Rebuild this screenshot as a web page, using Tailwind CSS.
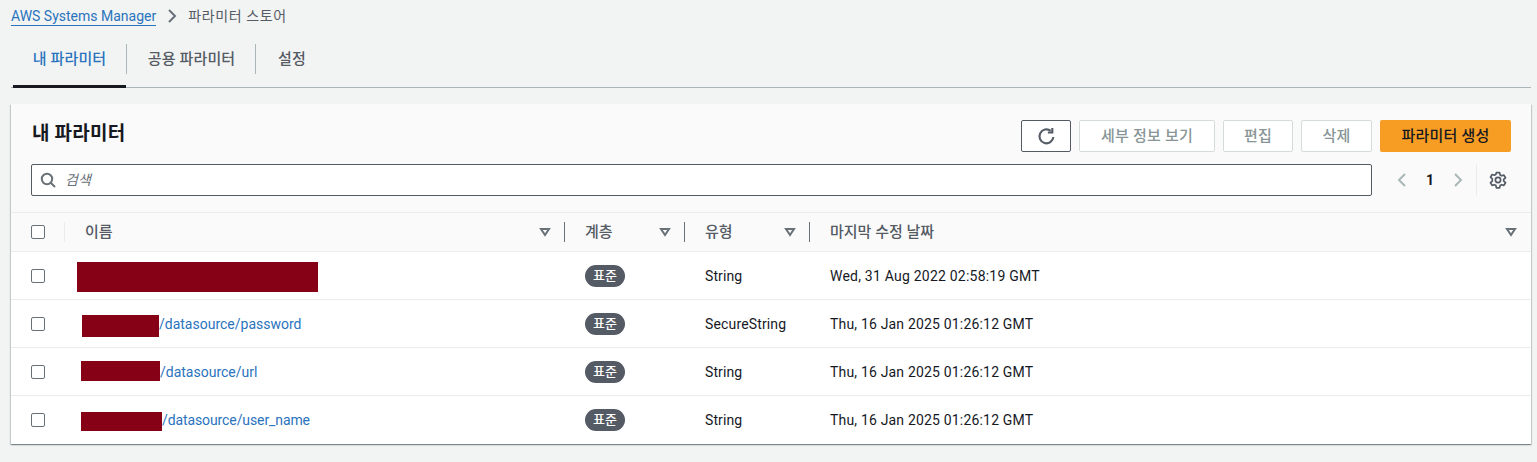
<!DOCTYPE html>
<html lang="ko">
<head>
    <meta charset="UTF-8">
    <title>파라미터 스토어</title>
    <script src="https://cdn.jsdelivr.net/npm/@tailwindcss/browser@4"></script>
</head>
<body class="bg-[#f2f3f3] h-[462px] overflow-hidden text-[14px] leading-[20px] text-[#16191f] font-['Roboto','Noto_Sans_CJK_KR',sans-serif]">
    <!-- Breadcrumb -->
    <nav class="flex items-center h-[32px] pl-[11px]">
        <a class="text-[#2a73bd] border-b border-[#2a73bd] leading-[17px] mt-[1px] text-[14px]">AWS Systems Manager</a>
        <svg class="w-[12px] h-[14px] ml-[10px] mr-[10px]" viewBox="0 0 12 14" fill="none" stroke="#687078" stroke-width="2"><path d="M3 1l6 6-6 6"/></svg>
        <span class="text-[#545b64] text-[14px] tracking-[0.6px]">파라미터 스토어</span>
    </nav>

    <!-- Tabs -->
    <div class="ml-[11px] mr-[6px] mt-[12px] h-[44px] border-b border-[#aab7b8] flex items-start text-[15px] tracking-[0.15px] font-medium text-[#545b64]">
        <div class="relative w-[113px] h-[44px] ml-[2px] border-b-[3px] border-[#16191f] text-[#2a73bd] flex justify-center pt-[5px]">내 파라미터
            <span class="absolute right-[-1px] top-0 h-[30px] w-px bg-[#aab7b8]"></span>
        </div>
        <div class="relative w-[130px] h-[30px] pl-[1px] flex justify-center pt-[5px]">공용 파라미터
            <span class="absolute right-0 top-0 h-[30px] w-px bg-[#aab7b8]"></span>
        </div>
        <div class="w-[72px] h-[30px] flex justify-center pt-[5px]">설정</div>
    </div>

    <!-- Parameters card -->
    <section class="ml-[11px] mr-[6px] mt-[16px] bg-white h-[340px] shadow-[0_1px_1px_0_rgba(0,28,36,0.3),1px_1px_1px_0_rgba(0,28,36,0.15),-1px_1px_1px_0_rgba(0,28,36,0.15)]">
        <div class="bg-[#fafafa] h-[109px] border-b border-[#eaeded] pl-[20px] pr-[20px]">
            <div class="flex justify-between pt-[16px] h-[60px]">
                <h2 class="text-[19px] tracking-[0.2px] font-bold leading-[26px] text-[#16191f] pl-[1px] pt-[1px]">내 파라미터</h2>
                <div class="flex gap-[8px] text-[15px] tracking-[0.2px] font-medium">
                    <button class="w-[50px] h-[32px] bg-white border border-[#545b64] rounded-[2px] flex items-center justify-center">
                        <svg class="w-[19px] h-[19px]" viewBox="0 0 18 18" fill="none" stroke="#545b64" stroke-width="2"><path d="M15.5 9.5A6.6 6.6 0 1 1 13 3.7"/><path d="M14.5 1v4.2h-4.2"/></svg>
                    </button>
                    <button class="w-[136px] h-[32px] bg-white border border-[#d5dbdb] rounded-[2px] text-[#879596]">세부 정보 보기</button>
                    <button class="w-[70px] h-[32px] bg-white border border-[#d5dbdb] rounded-[2px] text-[#879596]">편집</button>
                    <button class="w-[71px] h-[32px] bg-white border border-[#d5dbdb] rounded-[2px] text-[#879596]">삭제</button>
                    <button class="w-[131px] h-[32px] bg-[#f79d24] rounded-[2px] text-[#16191f]">파라미터 생성</button>
                </div>
            </div>
            <div class="flex items-center">
                <div class="w-[1341px] h-[32px] bg-white border border-[#545b64] rounded-[2px] flex items-center pl-[8px]">
                    <svg class="w-[16px] h-[16px]" viewBox="0 0 16 16" fill="none" stroke="#687078" stroke-width="2"><circle cx="7" cy="7" r="5.2"/><path d="M11 11l4 4"/></svg>
                    <span class="italic text-[#687078] ml-[9px] text-[14px]">검색</span>
                </div>
                <svg class="w-[12px] h-[16px] ml-[24px]" viewBox="0 0 12 16" fill="none" stroke="#aab7b8" stroke-width="2"><path d="M9 2L3 8l6 6"/></svg>
                <span class="w-[44px] text-center font-bold text-[14px] text-[#16191f]">1</span>
                <svg class="w-[12px] h-[16px]" viewBox="0 0 12 16" fill="none" stroke="#aab7b8" stroke-width="2"><path d="M3 2l6 6-6 6"/></svg>
                <span class="w-px h-[32px] bg-[#eaeded] ml-[12px]"></span>
                <svg class="w-[18px] h-[18px] ml-[12px]" viewBox="0 0 18 18" fill="none" stroke="#545b64" stroke-width="1.7" stroke-linejoin="round"><path d="M7.4 1.6h3.2l.5 2.3 1.5.9 2.3-.7 1.6 2.7-1.8 1.6v1.7l1.8 1.6-1.6 2.7-2.3-.7-1.5.9-.5 2.3H7.4l-.5-2.3-1.5-.9-2.3.7-1.6-2.7 1.8-1.6V7.8L1.5 6.2l1.6-2.7 2.3.7 1.5-.9z"/><circle cx="9" cy="9" r="2.6"/></svg>
            </div>
        </div>

        <!-- Table header -->
        <div class="grid grid-cols-[54px_500px_120px_125px_1fr] h-[39px] bg-[#fafafa] border-b border-[#eaeded] items-center font-medium text-[15px] text-[#545b64]">
            <div class="relative h-[20px] pl-[20px] flex items-center">
                <span class="w-[14px] h-[14px] border border-[#687078] rounded-[2px] bg-white"></span>
                <span class="absolute right-0 top-0 h-[20px] w-px bg-[#eaeded]"></span>
            </div>
            <div class="relative h-[20px] pl-[20px] flex items-center justify-between pr-[14px]">이름
                <svg class="w-[12px] h-[10px]" viewBox="0 0 12 10" fill="none" stroke="#687078" stroke-width="2"><path d="M2 2h8L6 8z"/></svg>
                <span class="absolute right-0 top-0 h-[20px] w-px bg-[#687078]"></span>
            </div>
            <div class="relative h-[20px] pl-[20px] flex items-center justify-between pr-[14px]">계층
                <svg class="w-[12px] h-[10px]" viewBox="0 0 12 10" fill="none" stroke="#687078" stroke-width="2"><path d="M2 2h8L6 8z"/></svg>
                <span class="absolute right-0 top-0 h-[20px] w-px bg-[#687078]"></span>
            </div>
            <div class="relative h-[20px] pl-[20px] flex items-center justify-between pr-[14px]">유형
                <svg class="w-[12px] h-[10px]" viewBox="0 0 12 10" fill="none" stroke="#687078" stroke-width="2"><path d="M2 2h8L6 8z"/></svg>
                <span class="absolute right-0 top-0 h-[20px] w-px bg-[#687078]"></span>
            </div>
            <div class="h-[20px] pl-[20px] flex items-center justify-between pr-[14px]">마지막 수정 날짜
                <svg class="w-[12px] h-[10px]" viewBox="0 0 12 10" fill="none" stroke="#687078" stroke-width="2"><path d="M2 2h8L6 8z"/></svg>
            </div>
        </div>

        <!-- Rows -->
        <div class="grid grid-cols-[54px_500px_120px_125px_1fr] h-[48px] border-b border-[#eaeded] items-center">
            <div class="pl-[20px] flex"><span class="w-[14px] h-[14px] border border-[#687078] rounded-[2px]"></span></div>
            <div class="pl-[12px] flex items-center"><span class="w-[241px] h-[30px] mt-[3px] bg-[#860016]"></span></div>
            <div class="pl-[20px]"><span class="inline-flex items-center justify-center w-[40px] h-[22px] rounded-full bg-[#545b64] text-white text-[13px] font-medium">표준</span></div>
            <div class="pl-[20px] tracking-[0.1px]">String</div>
            <div class="pl-[20px] tracking-[0.22px]">Wed, 31 Aug 2022 02:58:19 GMT</div>
        </div>
        <div class="grid grid-cols-[54px_500px_120px_125px_1fr] h-[48px] border-b border-[#eaeded] items-center">
            <div class="pl-[20px] flex"><span class="w-[14px] h-[14px] border border-[#687078] rounded-[2px]"></span></div>
            <div class="pl-[17px] flex items-center"><span class="w-[77px] h-[22px] mt-[5px] bg-[#860016]"></span><a class="text-[#2a73bd]">/datasource/password</a></div>
            <div class="pl-[20px]"><span class="inline-flex items-center justify-center w-[40px] h-[22px] rounded-full bg-[#545b64] text-white text-[13px] font-medium">표준</span></div>
            <div class="pl-[20px] tracking-[0.15px]">SecureString</div>
            <div class="pl-[20px] tracking-[0.18px]">Thu, 16 Jan 2025 01:26:12 GMT</div>
        </div>
        <div class="grid grid-cols-[54px_500px_120px_125px_1fr] h-[48px] border-b border-[#eaeded] items-center">
            <div class="pl-[20px] flex"><span class="w-[14px] h-[14px] border border-[#687078] rounded-[2px]"></span></div>
            <div class="pl-[16px] flex items-center"><span class="w-[79px] h-[20px] mb-[1px] bg-[#860016]"></span><a class="text-[#2a73bd]">/datasource/url</a></div>
            <div class="pl-[20px]"><span class="inline-flex items-center justify-center w-[40px] h-[22px] rounded-full bg-[#545b64] text-white text-[13px] font-medium">표준</span></div>
            <div class="pl-[20px] tracking-[0.1px]">String</div>
            <div class="pl-[20px] tracking-[0.18px]">Thu, 16 Jan 2025 01:26:12 GMT</div>
        </div>
        <div class="grid grid-cols-[54px_500px_120px_125px_1fr] h-[48px] items-center">
            <div class="pl-[20px] flex"><span class="w-[14px] h-[14px] border border-[#687078] rounded-[2px]"></span></div>
            <div class="pl-[16px] flex items-center"><span class="w-[81px] h-[19px] mt-[3px] bg-[#860016]"></span><a class="text-[#2a73bd] tracking-[-0.1px]">/datasource/user_name</a></div>
            <div class="pl-[20px]"><span class="inline-flex items-center justify-center w-[40px] h-[22px] rounded-full bg-[#545b64] text-white text-[13px] font-medium">표준</span></div>
            <div class="pl-[20px] tracking-[0.1px]">String</div>
            <div class="pl-[20px] tracking-[0.18px]">Thu, 16 Jan 2025 01:26:12 GMT</div>
        </div>
    </section>
</body>
</html>
